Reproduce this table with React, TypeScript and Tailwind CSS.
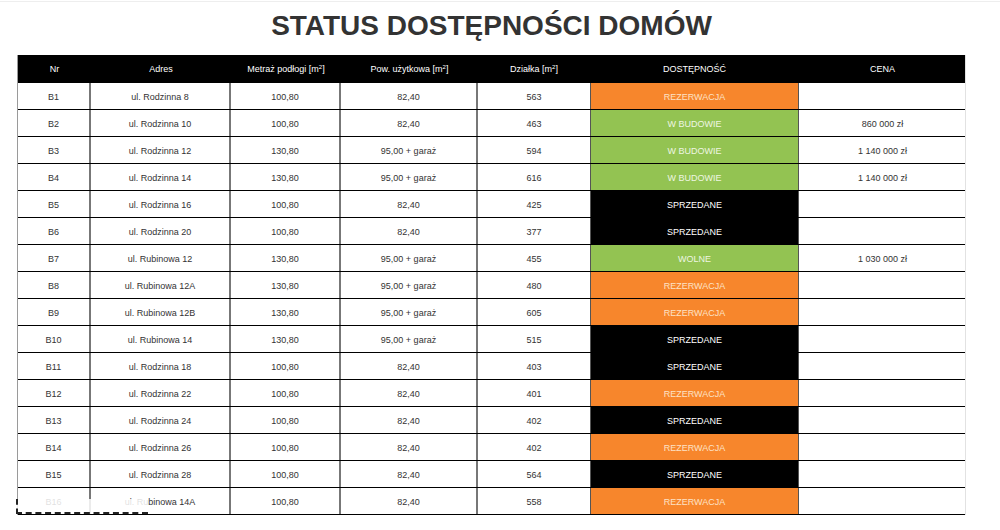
import React from "react";

type Status = "REZERWACJA" | "W BUDOWIE" | "SPRZEDANE" | "WOLNE";

const rows: [string, string, string, string, string, Status, string][] = [
  ["B1", "ul. Rodzinna 8", "100,80", "82,40", "563", "REZERWACJA", ""],
  ["B2", "ul. Rodzinna 10", "100,80", "82,40", "463", "W BUDOWIE", "860 000 zł"],
  ["B3", "ul. Rodzinna 12", "130,80", "95,00 + garaż", "594", "W BUDOWIE", "1 140 000 zł"],
  ["B4", "ul. Rodzinna 14", "130,80", "95,00 + garaż", "616", "W BUDOWIE", "1 140 000 zł"],
  ["B5", "ul. Rodzinna 16", "100,80", "82,40", "425", "SPRZEDANE", ""],
  ["B6", "ul. Rodzinna 20", "100,80", "82,40", "377", "SPRZEDANE", ""],
  ["B7", "ul. Rubinowa 12", "130,80", "95,00 + garaż", "455", "WOLNE", "1 030 000 zł"],
  ["B8", "ul. Rubinowa 12A", "130,80", "95,00 + garaż", "480", "REZERWACJA", ""],
  ["B9", "ul. Rubinowa 12B", "130,80", "95,00 + garaż", "605", "REZERWACJA", ""],
  ["B10", "ul. Rubinowa 14", "130,80", "95,00 + garaż", "515", "SPRZEDANE", ""],
  ["B11", "ul. Rodzinna 18", "100,80", "82,40", "403", "SPRZEDANE", ""],
  ["B12", "ul. Rodzinna 22", "100,80", "82,40", "401", "REZERWACJA", ""],
  ["B13", "ul. Rodzinna 24", "100,80", "82,40", "402", "SPRZEDANE", ""],
  ["B14", "ul. Rodzinna 26", "100,80", "82,40", "402", "REZERWACJA", ""],
  ["B15", "ul. Rodzinna 28", "100,80", "82,40", "564", "SPRZEDANE", ""],
  ["B16", "ul. Rubinowa 14A", "100,80", "82,40", "558", "REZERWACJA", ""],
];

const statusClass: Record<Status, string> = {
  REZERWACJA: "bg-[#f7862c] text-[#fde2c6]",
  "W BUDOWIE": "bg-[#93c352] text-[#eef6e2]",
  WOLNE: "bg-[#93c352] text-[#eef6e2]",
  SPRZEDANE: "bg-black text-white",
};

const grid =
  "grid grid-cols-[73px_140px_110px_137px_112px_209px_167px]";

const cell = "flex items-center justify-center pt-[4px]";

function M2() {
  return (
    <>
      [m<sup className="text-[6px]">2</sup>]
    </>
  );
}

export default function App() {
  return (
    <div
      className="w-[1000px] h-[530px] bg-white relative overflow-hidden text-[#333]"
      style={{ fontFamily: '"Liberation Sans", Arial, sans-serif' }}
    >
      <div className="h-[2px] border-b border-[#eeeeee]" />
      <div className="w-[966px]">
        <div className="h-[53px] pt-[8px] pl-[17px] text-center text-[28px] leading-[32px] font-bold text-[#333]">
          STATUS DOSTĘPNOŚCI DOMÓW
        </div>
        <div className="ml-[17px] w-[949px] border-l border-[#9a9a9a] border-r border-r-[#e2e2e2]">
          <div className={`${grid} h-[28px] bg-black text-white text-[9px] items-center text-center pt-[2px]`}>
            <div>Nr</div>
            <div>Adres</div>
            <div>
              Metraż podłogi <M2 />
            </div>
            <div>
              Pow. użytkowa <M2 />
            </div>
            <div>
              Działka <M2 />
            </div>
            <div>DOSTĘPNOŚĆ</div>
            <div>CENA</div>
          </div>
          {rows.map((r) => (
            <div
              key={r[0]}
              className={`${grid} h-[27px] border-b border-black text-[9px] text-center`}
            >
              <div className={`${cell} border-r-2 border-[#777]`}>{r[0]}</div>
              <div className={`${cell} border-r-2 border-[#777]`}>{r[1]}</div>
              <div className={`${cell} border-r-2 border-[#777]`}>{r[2]}</div>
              <div className={`${cell} border-r-2 border-[#777]`}>{r[3]}</div>
              <div className={cell}>{r[4]}</div>
              <div className={`${cell} border-x border-[#555] ${statusClass[r[5]]}`}>
                {r[5]}
              </div>
              <div className={cell}>{r[6]}</div>
            </div>
          ))}
        </div>
      </div>
      <div className="absolute left-[16px] top-[499px] w-[132px] h-[15px] bg-white/85 border-l-2 border-b-2 border-dashed border-[#222]" />
    </div>
  );
}
